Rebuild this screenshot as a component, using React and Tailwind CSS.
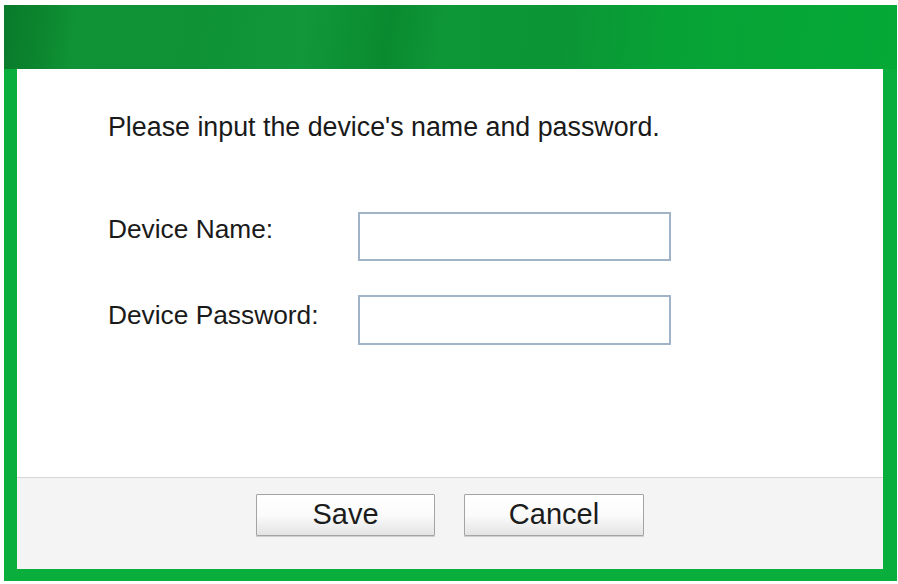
export default function App() {
  const font = { fontFamily: '"Liberation Sans", Arial, sans-serif' };
  return (
    <div className="w-[898px] h-[584px] bg-white pt-[5px] pl-[4px] pr-[1px] pb-[3px]" style={font}>
      <div className="w-full h-full flex flex-col bg-[#0aae3c]">
        <div className="h-[64px] shrink-0 bg-[linear-gradient(97deg,#0a7a2b_0px,#0b842e_35px,#109336_75px,#0f9236_200px,#11983a_300px,#0a8a30_385px,#0e9737_440px,#0c9535_560px,#07a236_660px,#05a936_893px)]" />
        <div className="flex-1 flex pl-[13px] pr-[14px] pb-[12px]">
          <div className="flex-1 flex flex-col bg-white">
            <div className="h-[408px] shrink-0 pt-[43px] pl-[91px] text-[#1a1a1a]">
              <div className="text-[26.8px] leading-[30px]">Please input the device's name and password.</div>
              <div className="mt-[70px] flex items-start">
                <div className="w-[250px] mt-[2px] text-[26.3px] leading-[30px]">Device Name:</div>
                <div className="w-[313px] h-[49px] border-2 border-[#a1b3c7] bg-white" />
              </div>
              <div className="mt-[34px] flex items-start">
                <div className="w-[250px] mt-[5px] text-[26.3px] leading-[30px]">Device Password:</div>
                <div className="w-[313px] h-[50px] border-2 border-[#a1b3c7] bg-white" />
              </div>
            </div>
            <div className="h-px bg-[#d6d6d6]" />
            <div className="flex-1 bg-[#f4f4f4] pt-[16px] flex justify-center gap-[29px]">
              <div className="w-[179px] h-[42px] border border-[#a4a4a4] rounded-[1px] bg-gradient-to-b from-white via-[#fbfbfb] to-[#e4e4e4] flex items-center justify-center text-[29px] text-[#1c1c1c] shadow-[0_1px_0_#cfcfcf]">
                Save
              </div>
              <div className="w-[180px] h-[42px] border border-[#a4a4a4] rounded-[1px] bg-gradient-to-b from-white via-[#fbfbfb] to-[#e4e4e4] flex items-center justify-center text-[29px] text-[#1c1c1c] shadow-[0_1px_0_#cfcfcf]">
                Cancel
              </div>
            </div>
          </div>
        </div>
      </div>
    </div>
  );
}
